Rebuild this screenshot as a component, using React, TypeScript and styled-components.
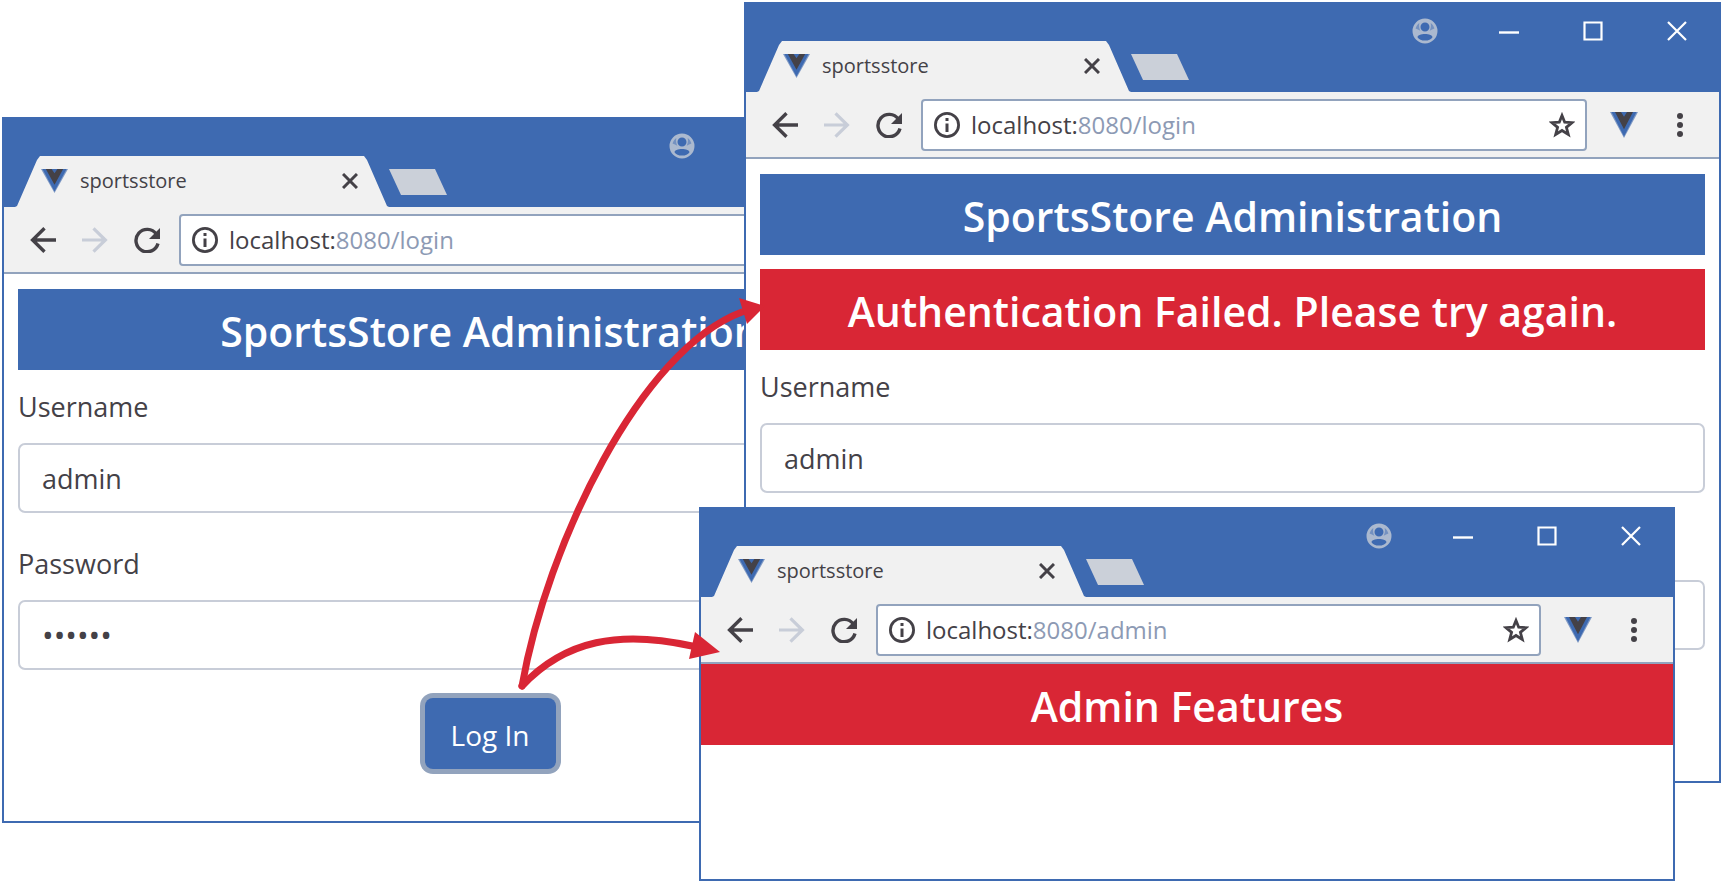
import React, { useId } from "react";
import styled, { createGlobalStyle, css } from "styled-components";

const color = {
  blue: "#3e6ab1",
  red: "#d92635",
  ink: "#444147",
  muted: "#8d9ab4",
  line: "#c8cdd8",
  chrome: "#f1f1f1",
  chromeLine: "#92a3bd",
};

const GlobalStyle = createGlobalStyle`
  *, *::before, *::after { box-sizing: border-box; }
  body {
    margin: 0;
    background: #fff;
    color: ${color.ink};
    font-family: "Open Sans", "Noto Sans", sans-serif;
  }
  button, input { font: inherit; color: inherit; }
`;

const Desktop = styled.main`
  position: relative;
  min-width: 1300px;
  min-height: 885px;
  overflow: hidden;
`;

const WindowFrame = styled.section<{ $left: number; $right: number; $top: number }>`
  position: absolute;
  left: ${(p) => p.$left}px;
  right: ${(p) => p.$right}px;
  top: ${(p) => p.$top}px;
  background: #fff;
  border: 2px solid ${color.blue};
  border-top: 0;
`;

const TitleBar = styled.header`
  display: flex;
  align-items: flex-end;
  height: 90px;
  padding-left: 11px;
  background: ${color.blue};
`;

const Tab = styled.div`
  display: flex;
  align-items: center;
  width: 374px;
  height: 51px;
  padding: 0 31px 1px 26px;
  background: ${color.chrome};
  clip-path: polygon(0 100%, 2px 98%, 22px 4px, 25px 0, calc(100% - 25px) 0, calc(100% - 22px) 4px, calc(100% - 2px) 98%, 100% 100%);
`;

const TabTitle = styled.span`
  flex: 1;
  margin-left: 12px;
  font-size: 20px;
  line-height: 28px;
`;

const IconButton = styled.button<{ $color?: string }>`
  display: flex;
  flex: none;
  padding: 0;
  border: 0;
  background: none;
  color: ${(p) => p.$color ?? color.ink};
`;

const NewTab = styled.button`
  width: 58px;
  height: 26px;
  margin-bottom: 12px;
  padding: 0;
  border: 0;
  background: #cbd0d9;
  clip-path: polygon(0 0, 46px 0, 100% 100%, 12px 100%);
`;

const WindowControls = styled.div`
  display: flex;
  align-items: center;
  align-self: flex-start;
  gap: 58px;
  height: 58px;
  margin-left: auto;
  padding-right: 29px;
`;

const Toolbar = styled.div`
  display: flex;
  align-items: center;
  height: 67px;
  padding: 0 36px 0 26px;
  background: ${color.chrome};
  border-bottom: 2px solid ${color.chromeLine};
`;

const NavButtons = styled.div`
  display: flex;
  gap: 26px;
  margin-right: 19px;
`;

const AddressBar = styled.div`
  display: flex;
  flex: 1;
  align-items: center;
  height: 52px;
  margin-right: 23px;
  padding: 0 10px 0 11px;
  background: #fff;
  border: 2px solid ${color.chromeLine};
  border-radius: 4px;
`;

const Address = styled.span`
  flex: 1;
  margin-left: 11px;
  font-size: 24px;
  line-height: 32px;
`;

const AddressPath = styled.span`
  color: ${color.muted};
`;

const ToolbarActions = styled.div`
  display: flex;
  align-items: center;
  gap: 39px;
`;

const Page = styled.div<{ $bottom: number }>`
  display: flex;
  flex-direction: column;
  gap: 14px;
  padding: 15px 14px ${(p) => p.$bottom}px;
`;

const AdminPage = styled.div`
  padding-bottom: 134px;
`;

const Banner = styled.h1<{ $tone: "blue" | "red" }>`
  margin: 0;
  padding: 16px 14px 12px;
  background: ${(p) => color[p.$tone]};
  color: #fff;
  font-size: 41px;
  font-weight: 600;
  line-height: 53px;
  text-align: center;
  white-space: nowrap;
`;

const Form = styled.form`
  display: flex;
  flex-direction: column;
  gap: 28px;
`;

const Field = styled.div`
  display: flex;
  flex-direction: column;
  gap: 15px;
`;

const Label = styled.label`
  padding-top: 2px;
  font-size: 27px;
  line-height: 42px;
`;

const TextInput = styled.input`
  width: 100%;
  height: 70px;
  padding: 0 22px;
  background: #fff;
  border: 2px solid ${color.line};
  border-radius: 7px;
  outline: 0;
  font-size: 27px;

  &[type="password"] {
    font-size: 31px;
  }
`;

const SubmitButton = styled.button<{ $focused: boolean }>`
  align-self: center;
  width: 131px;
  height: 71px;
  padding: 2px 0 0;
  background: ${color.blue};
  border: 0;
  border-radius: 8px;
  color: #fff;
  font-size: 28px;
  ${(p) =>
    p.$focused &&
    css`
      box-shadow: 0 0 0 5px ${color.chromeLine};
    `}
`;

const ArrowLayer = styled.svg`
  position: absolute;
  inset: 0 auto auto 0;
  pointer-events: none;
`;

const VueLogo = ({ width, height }: { width: number; height: number }) => (
  <svg width={width} height={height} viewBox="0 0 28 25" preserveAspectRatio="none" aria-hidden="true">
    <path d="M0 0h28L14 25z" fill="#7f99c4" />
    <path d="M1.500 0h25L14 23.500z" fill="#3e6ab1" />
    <path d="M5 0h6l3 4.500L17 0h6l-9 16.500z" fill="#444147" />
  </svg>
);

const BackIcon = () => (
  <svg width="26" height="26" viewBox="0 0 26 26" fill="none" stroke="currentColor" strokeWidth="3.400" aria-hidden="true">
    <path d="M26 13H3M14.500 1.300L2.600 13l11.900 11.700" />
  </svg>
);

const ForwardIcon = () => (
  <svg width="26" height="26" viewBox="0 0 26 26" fill="none" stroke="currentColor" strokeWidth="3.200" aria-hidden="true">
    <path d="M0 13h23M11.500 1.300L23.400 13 11.500 24.700" />
  </svg>
);

const ReloadIcon = () => (
  <svg width="26" height="26" viewBox="0 0 26 26" aria-hidden="true">
    <path d="M22.300 7A11.200 11.200 0 1 0 24 16.500" fill="none" stroke="currentColor" strokeWidth="3.400" />
    <path d="M26 1v11H15z" fill="currentColor" />
  </svg>
);

const InfoIcon = () => (
  <svg width="26" height="26" viewBox="0 0 26 26" aria-hidden="true">
    <circle cx="13" cy="13" r="11.600" fill="none" stroke="currentColor" strokeWidth="2.800" />
    <path d="M11.500 11.500h3V20h-3zM11.500 6h3v3h-3z" fill="currentColor" />
  </svg>
);

const StarIcon = () => (
  <svg width="26" height="26" viewBox="0 0 26 26" aria-hidden="true">
    <path
      d="M13 3.500l2.700 6.700 7.300.5-5.600 4.600 1.900 7.200L13 18.500l-6.300 4 1.900-7.200L3 10.700l7.300-.5z"
      fill="none"
      stroke="currentColor"
      strokeWidth="2.800"
    />
  </svg>
);

const MenuIcon = () => (
  <svg width="6" height="26" viewBox="0 0 6 26" fill="currentColor" aria-hidden="true">
    <circle cx="3" cy="4" r="3" />
    <circle cx="3" cy="13" r="3" />
    <circle cx="3" cy="22" r="3" />
  </svg>
);

const TabCloseIcon = () => (
  <svg width="16" height="16" viewBox="0 0 16 16" stroke="currentColor" strokeWidth="3" aria-hidden="true">
    <path d="M1 1l14 14M15 1L1 15" />
  </svg>
);

const ProfileIcon = () => (
  <svg width="26" height="26" viewBox="0 0 26 26" aria-hidden="true">
    <path
      d="M13 .5a12.500 12.500 0 1 0 0 25 12.500 12.500 0 0 0 0-25zm0 4a4.500 4.500 0 1 1 0 9 4.500 4.500 0 0 1 0-9zm0 11.500c4 0 7.500 1.300 7.500 3.200C19 21.300 16.500 22.600 13 22.600s-6-1.300-7.500-3.400C5.500 17.300 9 16 13 16z"
      fill="currentColor"
      fillRule="evenodd"
    />
    <path d="M3.600 10.500c.8-2.600 2-4.200 3.700-5.400-.6 3 0 5.800 1 7.600-1.600-.9-3-1.700-4.700-2.200zM22.400 10.500c-.8-2.600-2-4.200-3.700-5.400.6 3 0 5.800-1 7.600 1.600-.9 3-1.700 4.700-2.200z" fill="#3e6ab1" fillOpacity="0.500" />
  </svg>
);

const MinimizeIcon = () => (
  <svg width="26" height="26" viewBox="0 0 26 26" stroke="currentColor" strokeWidth="2.400" aria-hidden="true">
    <path d="M3 14.500h20" />
  </svg>
);

const MaximizeIcon = () => (
  <svg width="26" height="26" viewBox="0 0 26 26" fill="none" stroke="currentColor" strokeWidth="2.200" aria-hidden="true">
    <path d="M4.500 4.500h17v17h-17z" />
  </svg>
);

const CloseIcon = () => (
  <svg width="26" height="26" viewBox="0 0 26 26" stroke="currentColor" strokeWidth="2.200" aria-hidden="true">
    <path d="M4 4l18 18M22 4L4 22" />
  </svg>
);

interface BrowserProps {
  left: number;
  right: number;
  top: number;
  path: string;
  children: React.ReactNode;
}

function Browser({ left, right, top, path, children }: BrowserProps) {
  return (
    <WindowFrame $left={left} $right={right} $top={top}>
      <TitleBar>
        <Tab>
          <VueLogo width={27} height={24} />
          <TabTitle>sportsstore</TabTitle>
          <IconButton type="button" aria-label="Close tab">
            <TabCloseIcon />
          </IconButton>
        </Tab>
        <NewTab type="button" aria-label="New tab" />
        <WindowControls>
          <IconButton type="button" aria-label="Profile" $color="#abb9cf">
            <ProfileIcon />
          </IconButton>
          <IconButton type="button" aria-label="Minimize" $color="#fff">
            <MinimizeIcon />
          </IconButton>
          <IconButton type="button" aria-label="Maximize" $color="#fff">
            <MaximizeIcon />
          </IconButton>
          <IconButton type="button" aria-label="Close" $color="#fff">
            <CloseIcon />
          </IconButton>
        </WindowControls>
      </TitleBar>
      <Toolbar>
        <NavButtons>
          <IconButton type="button" aria-label="Back">
            <BackIcon />
          </IconButton>
          <IconButton type="button" aria-label="Forward" $color={color.line}>
            <ForwardIcon />
          </IconButton>
          <IconButton type="button" aria-label="Reload">
            <ReloadIcon />
          </IconButton>
        </NavButtons>
        <AddressBar>
          <InfoIcon />
          <Address>
            localhost:<AddressPath>8080/{path}</AddressPath>
          </Address>
          <IconButton type="button" aria-label="Bookmark">
            <StarIcon />
          </IconButton>
        </AddressBar>
        <ToolbarActions>
          <IconButton type="button" aria-label="Vue devtools">
            <VueLogo width={28} height={26} />
          </IconButton>
          <IconButton type="button" aria-label="Menu">
            <MenuIcon />
          </IconButton>
        </ToolbarActions>
      </Toolbar>
      {children}
    </WindowFrame>
  );
}

function LoginForm({ password = "", focused = false }: { password?: string; focused?: boolean }) {
  const id = useId();
  return (
    <Form onSubmit={(e) => e.preventDefault()}>
      <Field>
        <Label htmlFor={`${id}-user`}>Username</Label>
        <TextInput id={`${id}-user`} type="text" defaultValue="admin" />
      </Field>
      <Field>
        <Label htmlFor={`${id}-pass`}>Password</Label>
        <TextInput id={`${id}-pass`} type="password" defaultValue={password} autoComplete="off" />
      </Field>
      <SubmitButton type="submit" $focused={focused}>
        Log In
      </SubmitButton>
    </Form>
  );
}

export default function App() {
  return (
    <>
      <GlobalStyle />
      <Desktop>
        <Browser left={2} right={747} top={117} path="login">
          <Page $bottom={52}>
            <Banner $tone="blue">SportsStore Administration</Banner>
            <LoginForm password="secret" focused />
          </Page>
        </Browser>
        <Browser left={744} right={4} top={2} path="login">
          <Page $bottom={32}>
            <Banner $tone="blue">SportsStore Administration</Banner>
            <Banner $tone="red">Authentication Failed. Please try again.</Banner>
            <LoginForm />
          </Page>
        </Browser>
        <Browser left={699} right={50} top={507} path="admin">
          <AdminPage>
            <Banner $tone="red">Admin Features</Banner>
          </AdminPage>
        </Browser>
        <ArrowLayer width="780" height="700" viewBox="0 0 780 700" aria-hidden="true">
          <g fill="none" stroke={color.red} strokeWidth="7" strokeLinecap="round">
            <path d="M522 686C547 545 640 350 742 312" />
            <path d="M522 686C565 640 620 630 692 646" />
          </g>
          <path d="M739 298L765 306L747 324ZM695 632L720 652L689 659Z" fill={color.red} />
        </ArrowLayer>
      </Desktop>
    </>
  );
}
